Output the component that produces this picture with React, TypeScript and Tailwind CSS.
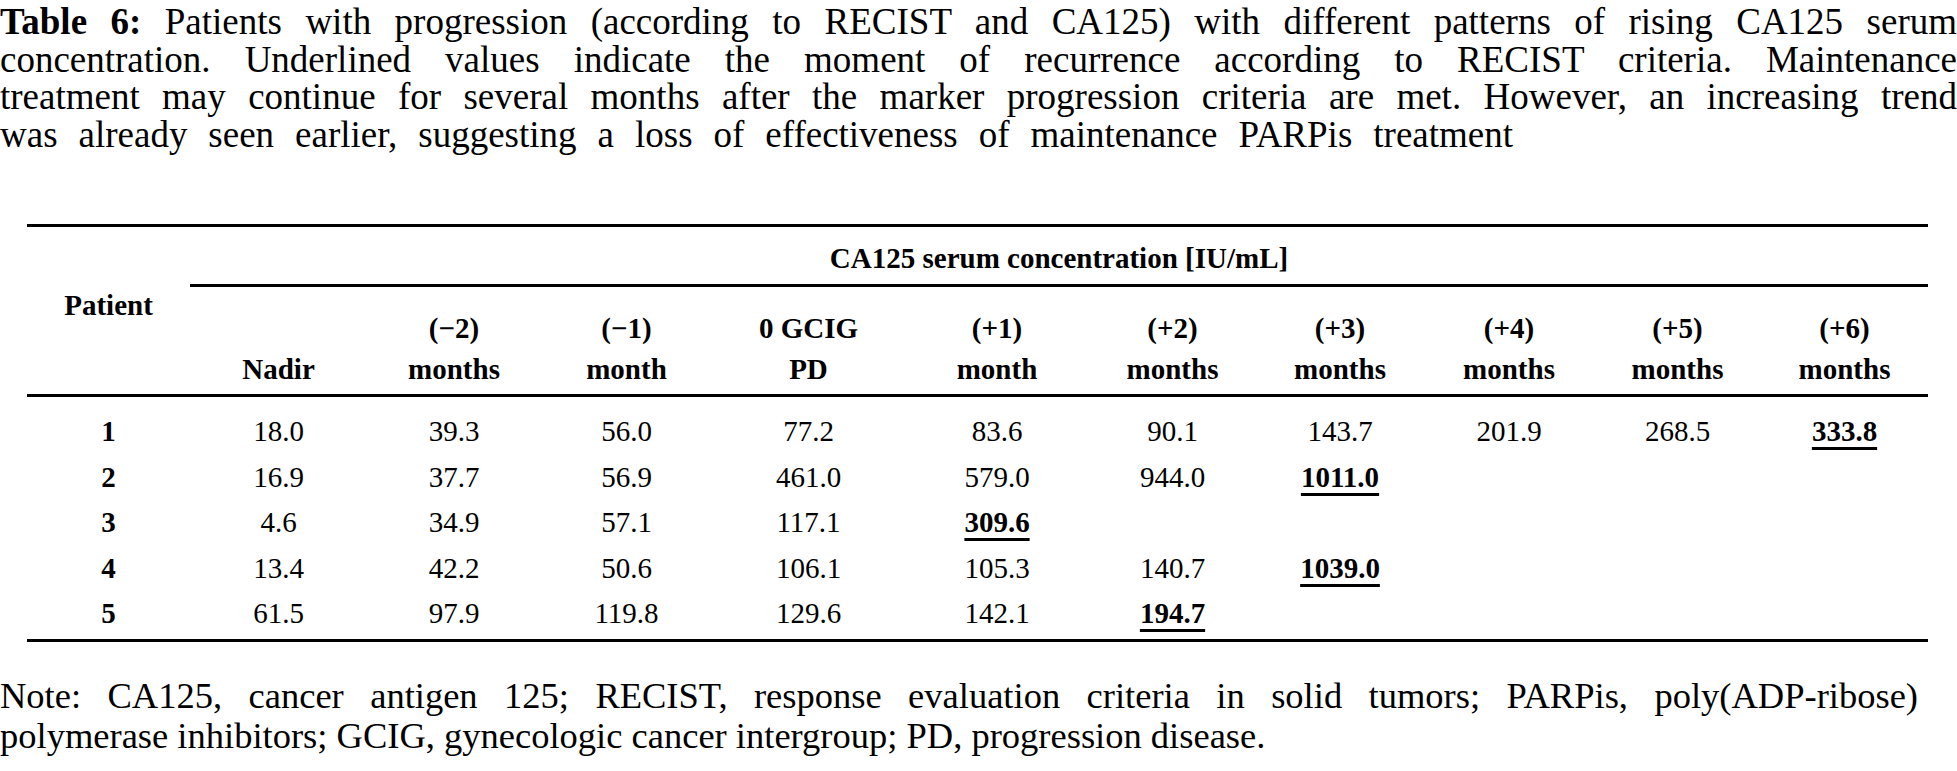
const columnWidths = [
    'w-[163px]',
    'w-[177px]',
    'w-[174px]',
    'w-[171px]',
    'w-[193px]',
    'w-[184px]',
    'w-[167px]',
    'w-[168px]',
    'w-[170px]',
    'w-[167px]',
    'w-[167px]',
]

const headers = [
    ['Nadir'],
    ['(−2)', 'months'],
    ['(−1)', 'month'],
    ['0 GCIG', 'PD'],
    ['(+1)', 'month'],
    ['(+2)', 'months'],
    ['(+3)', 'months'],
    ['(+4)', 'months'],
    ['(+5)', 'months'],
    ['(+6)', 'months'],
]

// mark = index of the value underlined (RECIST recurrence)
const patients = [
    { id: '1', values: ['18.0', '39.3', '56.0', '77.2', '83.6', '90.1', '143.7', '201.9', '268.5', '333.8'], mark: 9 },
    { id: '2', values: ['16.9', '37.7', '56.9', '461.0', '579.0', '944.0', '1011.0', '', '', ''], mark: 6 },
    { id: '3', values: ['4.6', '34.9', '57.1', '117.1', '309.6', '', '', '', '', ''], mark: 4 },
    { id: '4', values: ['13.4', '42.2', '50.6', '106.1', '105.3', '140.7', '1039.0', '', '', ''], mark: 6 },
    { id: '5', values: ['61.5', '97.9', '119.8', '129.6', '142.1', '194.7', '', '', '', ''], mark: 5 },
]

function Caption() {
    return (
        <div className="pt-[3px] text-[37px] leading-[37.5px]">
            <p className="text-justify [text-align-last:justify]">
                <b>Table 6:</b> Patients with progression (according to RECIST and CA125) with different patterns of rising CA125 serum
            </p>
            <p className="text-justify [text-align-last:justify]">
                concentration. Underlined values indicate the moment of recurrence according to RECIST criteria. Maintenance
            </p>
            <p className="text-justify [text-align-last:justify]">
                treatment may continue for several months after the marker progression criteria are met. However, an increasing trend
            </p>
            <p className="w-[1513px] text-justify [text-align-last:justify]">
                was already seen earlier, suggesting a loss of effectiveness of maintenance PARPis treatment
            </p>
        </div>
    )
}

function DataTable() {
    return (
        <table className="mt-[71px] ml-[27px] w-[1901px] table-fixed border-collapse text-[29px]">
            <colgroup>
                {columnWidths.map((w, i) => (
                    <col key={i} className={w} />
                ))}
            </colgroup>
            <thead>
                <tr>
                    <th rowSpan={2} className="border-t-[3px] border-b-[3px] border-black pb-[10px] align-middle font-bold">
                        Patient
                    </th>
                    <th colSpan={10} className="h-[60px] border-t-[3px] border-b-[3px] border-black pt-[6px] align-middle font-bold">
                        CA125 serum concentration [IU/mL]
                    </th>
                </tr>
                <tr>
                    {headers.map((lines, i) => (
                        <th key={i} className="h-[110px] border-b-[3px] border-black pb-[4px] align-bottom font-bold leading-[41px]">
                            {lines.map((l) => (
                                <div key={l}>{l}</div>
                            ))}
                        </th>
                    ))}
                </tr>
            </thead>
            <tbody>
                {patients.map((p, r) => {
                    const first = r == 0
                    const last = r == patients.length - 1
                    return (
                        <tr key={p.id} className={last ? 'border-b-[3px] border-black' : ''}>
                            <td className={`text-center font-bold leading-[45.5px] ${first ? 'pt-[12px]' : ''} ${last ? 'pb-[2px]' : ''}`}>
                                {p.id}
                            </td>
                            {p.values.map((v, i) => (
                                <td key={i} className={`text-center leading-[45.5px] ${first ? 'pt-[12px]' : ''} ${last ? 'pb-[2px]' : ''}`}>
                                    {i == p.mark ? (
                                        <span className="font-bold underline decoration-[3px] underline-offset-[6px]">{v}</span>
                                    ) : (
                                        v
                                    )}
                                </td>
                            ))}
                        </tr>
                    )
                })}
            </tbody>
        </table>
    )
}

function Note() {
    return (
        <div className="mt-[34px] w-[1918px] text-[36.5px] leading-[40px]">
            <p className="text-justify [text-align-last:justify]">
                Note: CA125, cancer antigen 125; RECIST, response evaluation criteria in solid tumors; PARPis, poly(ADP-ribose)
            </p>
            <p>polymerase inhibitors; GCIG, gynecologic cancer intergroup; PD, progression disease.</p>
        </div>
    )
}

export default function App() {
    return (
        <section className="h-[771px] w-[1957px] overflow-hidden bg-white font-['Liberation_Serif',serif] text-black">
            <Caption />
            <DataTable />
            <Note />
        </section>
    )
}
